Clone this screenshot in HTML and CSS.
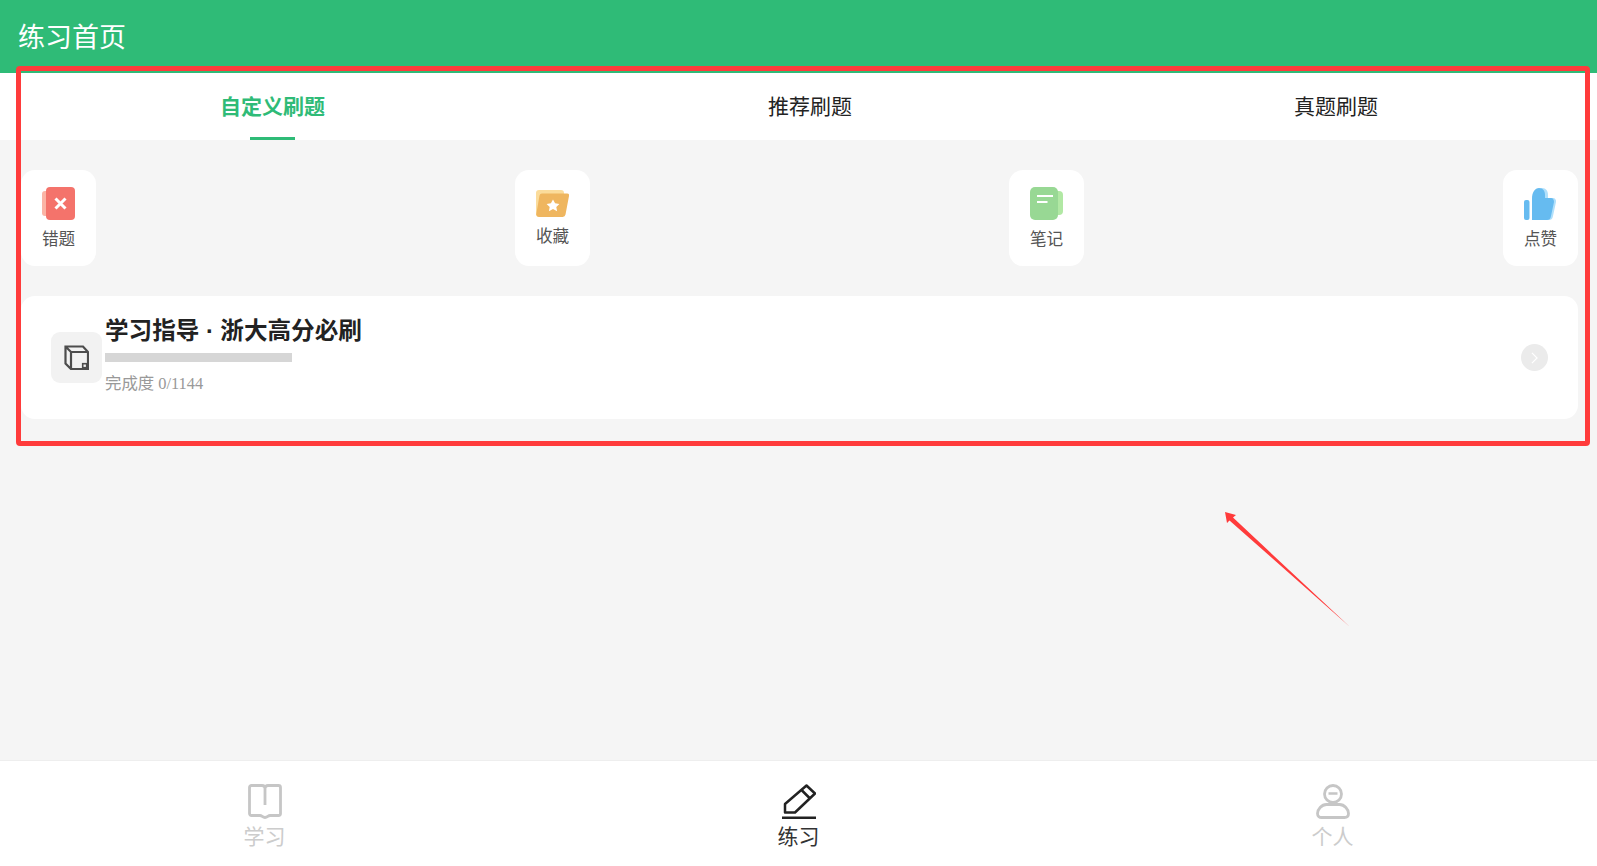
FILE: index.html
```html
<!DOCTYPE html>
<html lang="zh-CN">
<head>
<meta charset="utf-8">
<title>练习首页</title>
<link rel="stylesheet" href="styles.css">
</head>
<body>
<div class="page">
  <header class="header">练习首页</header>
  <nav class="tabs">
    <div class="tab active">自定义刷题</div>
    <div class="tab">推荐刷题</div>
    <div class="tab">真题刷题</div>
  </nav>
  <main class="main">
    <section class="shortcuts">
      <div class="shortcut">
        <svg class="ico ico-err" viewBox="0 0 34 33"><rect x="0" y="4" width="12" height="25" rx="3" fill="#fbb4a5"/><rect x="4" y="0" width="29" height="33" rx="4" fill="#f4736b"/><path d="M13.500 11.500l10 10M23.500 11.500l-10 10" stroke="#fff" stroke-width="3" fill="none"/></svg>
        <span class="shortcut-label">错题</span>
      </div>
      <div class="shortcut">
        <svg class="ico ico-fav" viewBox="0 0 33 27"><rect x="0" y="0" width="28" height="27" rx="3" fill="#fbdc9b"/><path d="M6 3.500h25a2 2 0 0 1 2 2.400L29.500 24.500a3 3 0 0 1-3 2.500H3a3 3 0 0 1-2.800-2.500L3.500 5.500a2.500 2.500 0 0 1 2.500-2z" fill="#efb65f"/><path d="M17 9.500l2.100 3.800 4.300.6-3.100 3 .8 4.300-4.100-2.100-4.100 2.100.8-4.300-3.100-3 4.300-.6z" fill="#fff"/></svg>
        <span class="shortcut-label">收藏</span>
      </div>
      <div class="shortcut">
        <svg class="ico ico-note" viewBox="0 0 33 33"><rect x="20" y="4" width="13" height="24" rx="4" fill="#b1e8a4"/><rect x="0" y="0" width="28" height="33" rx="5" fill="#98d894"/><path d="M7 9h16M7 15h10.500" stroke="#fff" stroke-width="2" fill="none"/></svg>
        <span class="shortcut-label">笔记</span>
      </div>
      <div class="shortcut">
        <svg class="ico ico-like" viewBox="0 0 33 33"><path d="M11 33V12c0-7 3-11 7-11s6 3 6 7v3h5c2 0 3.500 2 3 4l-3 14c-.5 3-2 4-4 4z" fill="#b1e0fb"/><rect x="0" y="13" width="5.500" height="20" rx="2" fill="#66bbf0"/><path d="M8 33V12c0-7 3-11 7-11s6 3 6 7v3h6c2 0 3 2 3 4l-3 14c-.5 3-2 4-4 4z" fill="#66bbf0"/></svg>
        <span class="shortcut-label">点赞</span>
      </div>
    </section>
    <section class="course">
      <div class="course-icon">
        <svg class="cube" viewBox="0 0 25 25"><path d="M1.500 1.500h17.500l5 5.500v17H7l-5.500-5.500z M1.500 1.500L7 7h17 M7 7v17" fill="none" stroke="#4d4d4d" stroke-width="2.200" stroke-linejoin="miter"/><rect x="18.700" y="18.700" width="4" height="4" fill="none" stroke="#4d4d4d" stroke-width="1.600"/></svg>
      </div>
      <div class="course-body">
        <div class="course-title">学习指导 · 浙大高分必刷</div>
        <div class="course-bar"></div>
        <div class="course-meta">完成度 0/1144</div>
      </div>
      <div class="course-go">
        <svg class="chev" viewBox="0 0 8 14"><path d="M1 1l6 6-6 6" fill="none" stroke="#fff" stroke-width="1.400"/></svg>
      </div>
    </section>
  </main>
  <footer class="bottom">
    <div class="bottom-item">
      <svg class="bottom-ico" viewBox="0 0 34 35"><path d="M3.500 1.500H14c2 0 3 1 3 3 0-2 1-3 3-3h10.500a2 2 0 0 1 2 2v26a2 2 0 0 1-2 2H22c-2 0-2.500 2-5 2s-3-2-5-2H3.500a2 2 0 0 1-2-2v-26a2 2 0 0 1 2-2z M17 4.500V21" fill="none" stroke="#c6c6c6" stroke-width="2.800" stroke-linejoin="round"/></svg>
      <span class="bottom-label">学习</span>
    </div>
    <div class="bottom-item current">
      <svg class="bottom-ico" viewBox="0 0 34 35"><path d="M3 28.500V20L24.500 1.500 33 9.500 13 28.500z M19.500 6l8.500 8.500" fill="none" stroke="#222" stroke-width="2.500" stroke-linejoin="round"/><path d="M0 33.700h34" stroke="#222" stroke-width="2.500"/></svg>
      <span class="bottom-label">练习</span>
    </div>
    <div class="bottom-item">
      <svg class="bottom-ico" viewBox="0 0 34 35"><circle cx="17" cy="10" r="8.500" fill="none" stroke="#c6c6c6" stroke-width="2.800"/><path d="M12.500 9.500h9" stroke="#c6c6c6" stroke-width="2.500"/><path d="M10.500 20.500h13c5 0 9 5 9 9 0 3-2 4-4 4h-23c-2 0-4-1-4-4 0-4 4-9 9-9z" fill="none" stroke="#c6c6c6" stroke-width="2.800"/></svg>
      <span class="bottom-label">个人</span>
    </div>
  </footer>
  <div class="mark-box"></div>
  <svg class="mark-arrow" viewBox="0 0 130 120"><path d="M2 1l11 3-3 2.500L127 116 6.500 9.500 4 12z" fill="#ff3b3b"/></svg>
</div>
</body>
</html>
```
FILE: styles.css
```css
* { box-sizing: border-box; }
html, body { margin: 0; padding: 0; }
body {
  font-family: "Liberation Serif", "Noto Sans CJK SC", serif;
  background: #f5f5f5;
}
.page {
  position: relative;
  width: 1597px;
  height: 866px;
  overflow: hidden;
  display: flex;
  flex-direction: column;
}
.header {
  height: 73px;
  flex: none;
  background: #2fbb77;
  color: #fff;
  font: 27px/71px "Noto Sans CJK SC", sans-serif;
  padding-left: 18px;
}
.tabs {
  height: 67px;
  flex: none;
  background: #fff;
  display: grid;
  grid-template-columns: 545px 530px 1fr;
}
.tab {
  position: relative;
  text-align: center;
  font: 21px/65px "Noto Sans CJK SC", sans-serif;
  color: #222;
}
.tab.active {
  color: #2fbb77;
  font-weight: 700;
}
.tab.active::after {
  content: "";
  position: absolute;
  left: 250px;
  bottom: 0;
  width: 45px;
  height: 3px;
  background: #2fbb77;
}
.main {
  flex: 1;
  padding: 30px 19px 0 21px;
}
.shortcuts {
  display: flex;
  justify-content: space-between;
}
.shortcut {
  width: 75px;
  height: 96px;
  background: #fff;
  border-radius: 14px;
  display: flex;
  flex-direction: column;
  align-items: center;
  justify-content: center;
  gap: 6px;
}
.ico { display: block; }
.ico-err { width: 34px; height: 33px; }
.ico-fav { width: 33px; height: 27px; }
.ico-note { width: 33px; height: 33px; }
.ico-like { width: 33px; height: 33px; }
.shortcut-label {
  font: 16.600px/24px "Noto Sans CJK SC", sans-serif;
  color: #555;
}
.course {
  margin-top: 30px;
  height: 123px;
  background: #fff;
  border-radius: 14px;
  display: flex;
  align-items: center;
  padding-left: 30px;
  padding-right: 30px;
}
.course-icon {
  width: 51px;
  height: 51px;
  flex: none;
  background: #f2f2f2;
  border-radius: 9px;
  display: flex;
  align-items: center;
  justify-content: center;
}
.cube { width: 25px; height: 25px; display: block; }
.course-body {
  flex: 1;
  margin-left: 3px;
  padding-bottom: 4px;
}
.course-title {
  font: 700 23.600px/34px "Liberation Sans", "Noto Sans CJK SC", sans-serif;
  color: #222;
  position: relative;
  top: -2px;
}
.course-bar {
  width: 187px;
  height: 9px;
  margin-top: 3px;
  background: #d6d6d6;
}
.course-meta {
  margin-top: 10px;
  font-size: 16.400px;
  line-height: 24px;
  color: #999;
}
.course-go {
  width: 27px;
  height: 27px;
  flex: none;
  border-radius: 50%;
  background: #ebebeb;
  display: flex;
  align-items: center;
  justify-content: center;
}
.chev { width: 7px; height: 12px; display: block; }
.bottom {
  height: 106px;
  flex: none;
  background: #fff;
  border-top: 1px solid #eee;
  display: grid;
  grid-template-columns: repeat(3, 534px);
  justify-content: center;
  padding-top: 23px;
}
.bottom-item {
  display: flex;
  flex-direction: column;
  align-items: center;
  gap: 1px;
}
.bottom-ico { width: 34px; height: 35px; display: block; }
.bottom-label {
  font: 21px/30px "Noto Sans CJK SC", sans-serif;
  color: #ccc;
}
.current .bottom-label { color: #333; }
.mark-box {
  position: absolute;
  left: 16px;
  top: 66px;
  width: 1574px;
  height: 380px;
  border: 5.500px solid #ff3b3b;
  border-radius: 4px;
  pointer-events: none;
}
.mark-arrow {
  position: absolute;
  left: 1223px;
  top: 511px;
  width: 130px;
  height: 120px;
  pointer-events: none;
}
```
